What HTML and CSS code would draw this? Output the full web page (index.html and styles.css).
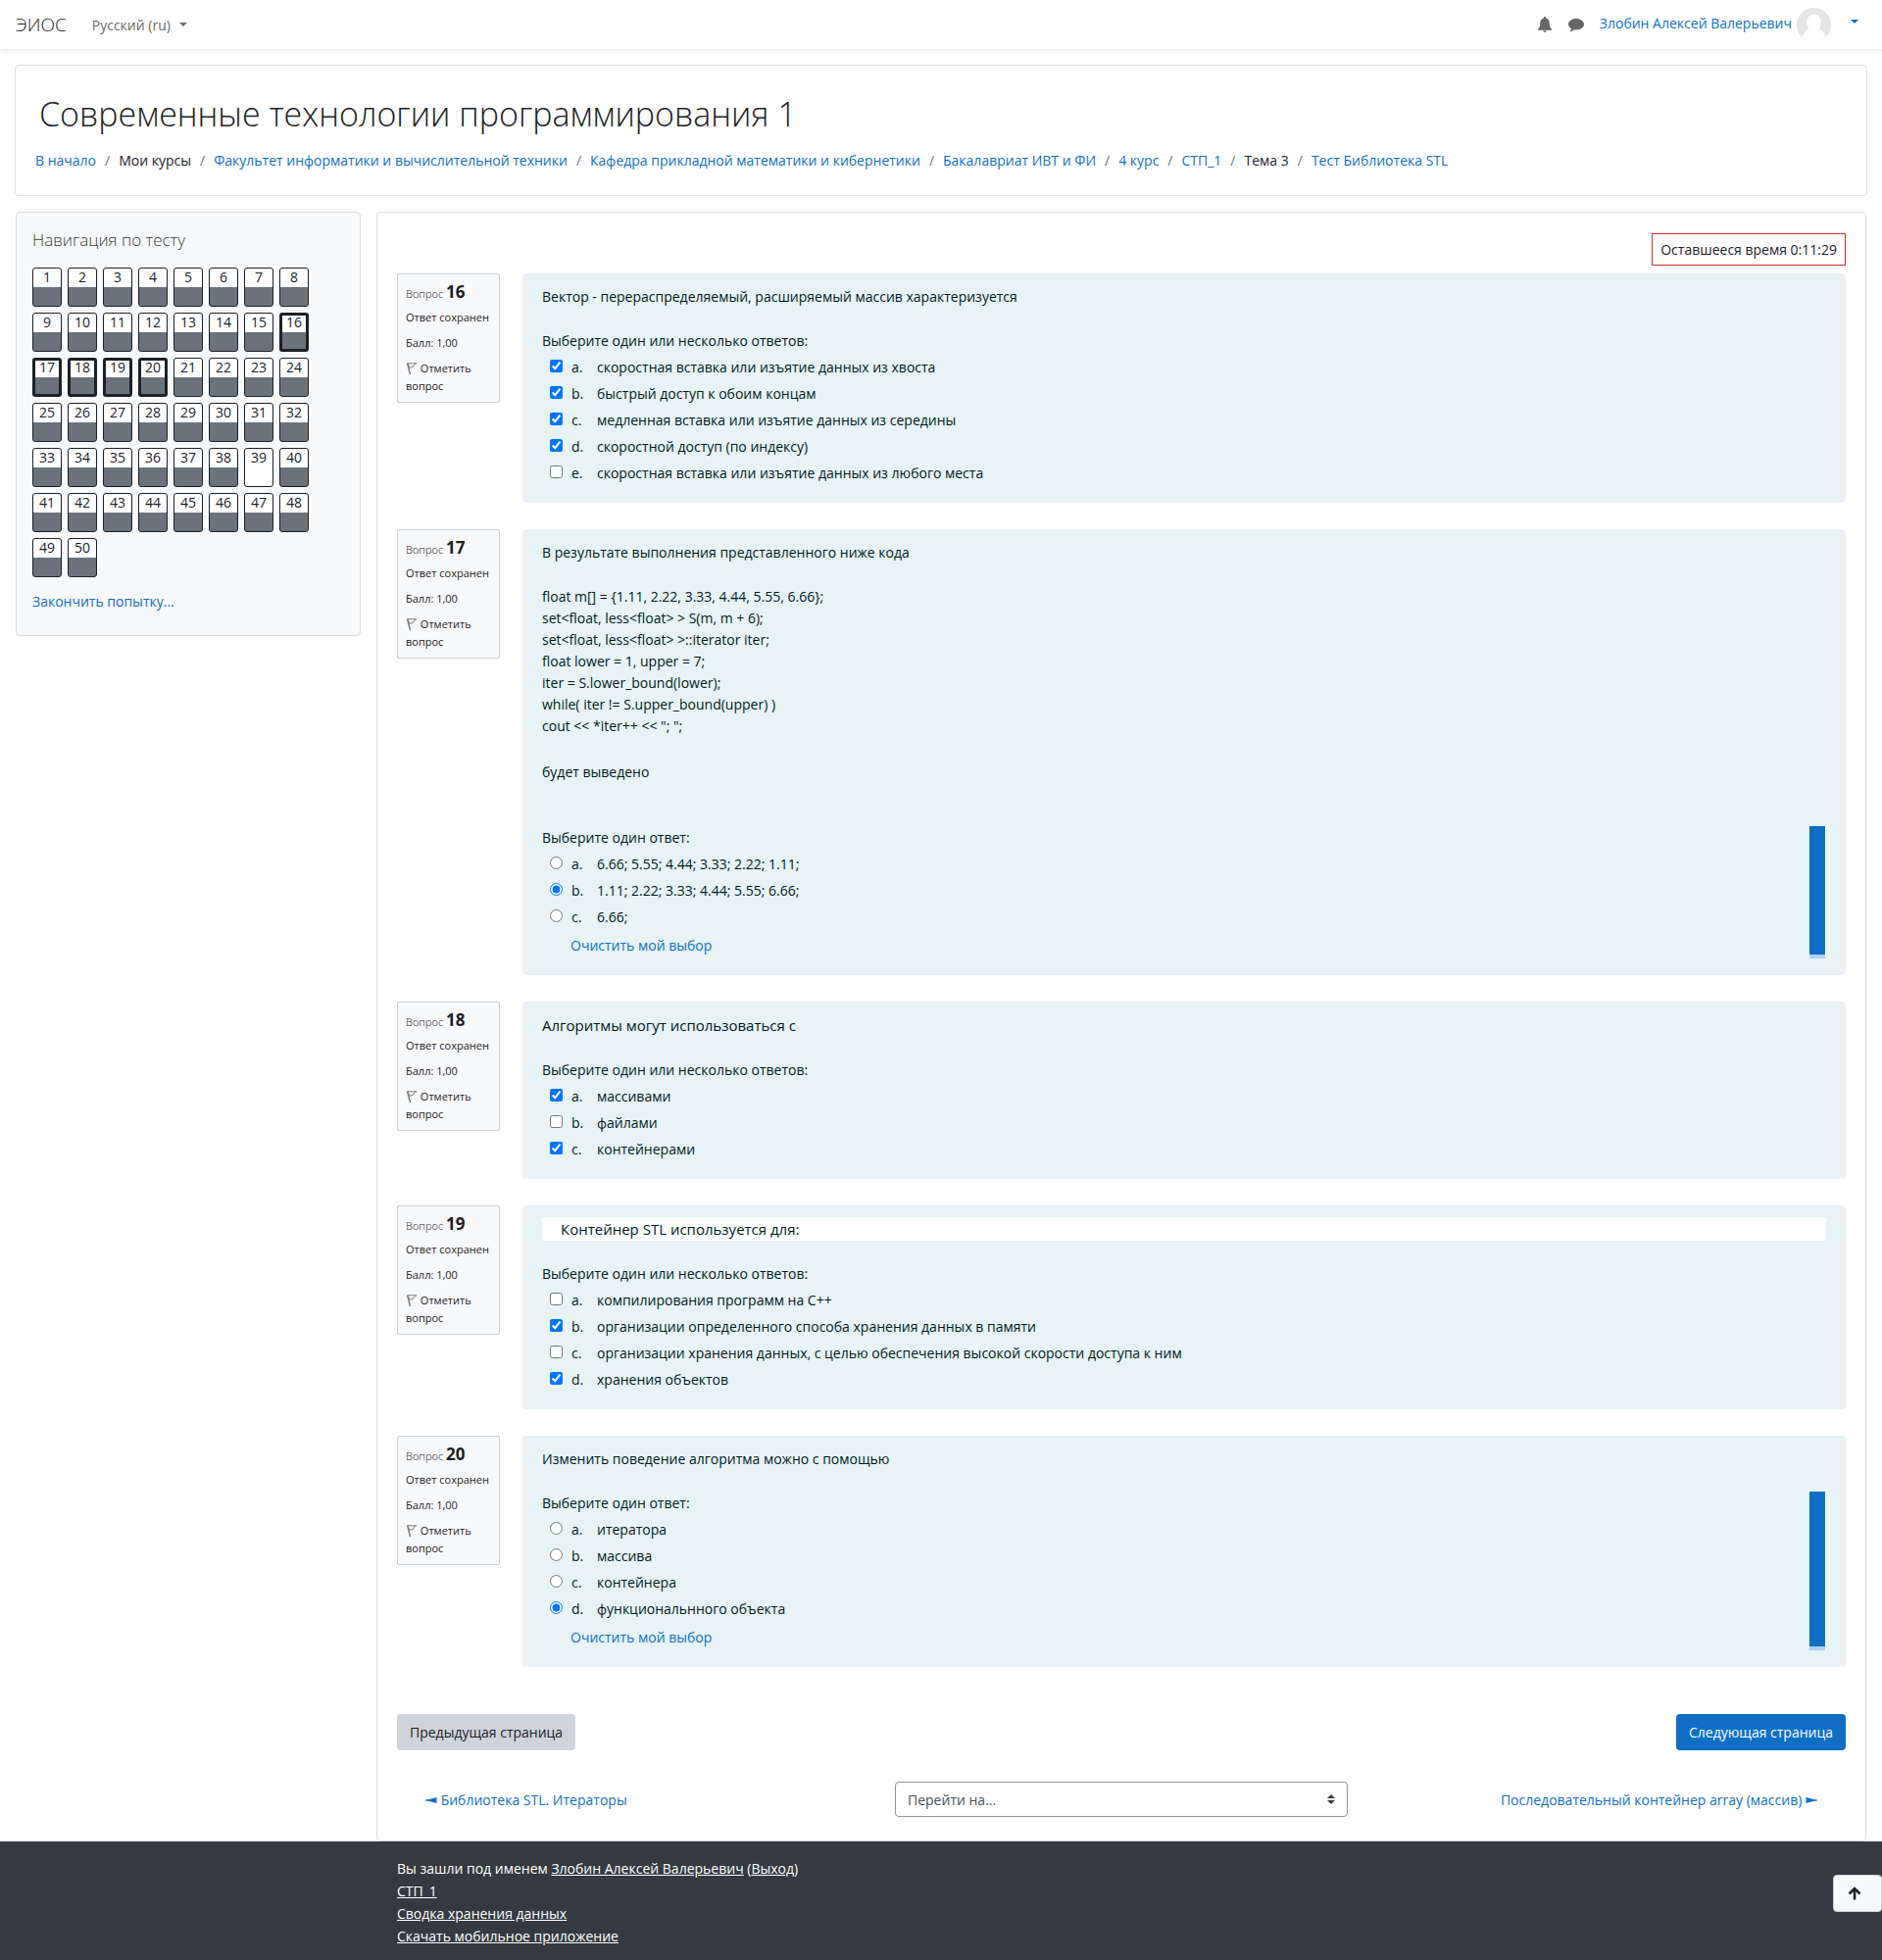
FILE: index.html
```html
<!DOCTYPE html>
<html lang="ru">
<head>
<meta charset="utf-8">
<title>Тест Библиотека STL</title>
<meta name="viewport" content="width=device-width, initial-scale=1">
<link rel="stylesheet" href="styles.css">
</head>
<body>
<svg class="sprite" aria-hidden="true">
  <symbol id="flag" viewBox="0 0 12 14"><path d="M1.500 1.500 4.500 13" fill="none" stroke="#777" stroke-width="1.400"/><path d="M2 1.600 11 1.800 8.200 3.400 8 5 4 6.400Z" fill="#eee" stroke="#888" stroke-width="1"/></symbol>
</svg>
<nav class="navbar">
  <a class="brand" href="#">ЭИОС</a>
  <a class="lang" href="#">Русский (ru) <span class="caret"></span></a>
  <div class="user-nav">
    <button class="icon-btn" aria-label="Уведомления"><svg width="16" height="16" viewBox="0 0 16 16"><path fill="#666" d="M8 0c.7 0 1.1.5 1.1 1.1v.5C11.300 2.100 12.700 3.900 12.700 6.200c0 3.600.9 5.300 2.300 6.500v1.100H1v-1.100C2.400 11.500 3.300 9.800 3.300 6.200c0-2.300 1.400-4.100 3.600-4.600v-.5C6.900.5 7.300 0 8 0zM6.200 14.300h3.600a1.800 1.700 0 0 1-3.600 0z"/></svg></button>
    <button class="icon-btn" aria-label="Сообщения"><svg width="16" height="16" viewBox="0 0 16 16"><path fill="#666" d="M8 2c4.400 0 8 2.500 8 5.700s-3.600 5.700-8 5.700c-.7 0-1.300-.1-1.900-.2C4.800 14.400 3.200 15.200 1.500 15.300c.9-1 1.400-2 1.500-3.200C1.200 11.100 0 9.500 0 7.700 0 4.500 3.600 2 8 2z"/></svg></button>
    <a class="user" href="#">Злобин Алексей Валерьевич
      <svg width="35" height="35" viewBox="0 0 35 35"><defs><clipPath id="round"><circle cx="17.500" cy="17.500" r="17.500"/></clipPath></defs><g clip-path="url(#round)"><path fill="#e5e5e5" d="M0 0h35v35H0z"/><ellipse cx="17.500" cy="15" rx="7.500" ry="8.500" fill="#fff"/><path fill="#fff" d="M4 35C6 27 9 22.500 13 21h9c4 1.500 7 6 9 14z"/></g></svg>
      <span class="caret"></span></a>
  </div>
</nav>

<header class="page-header">
  <h1>Современные технологии программирования 1</h1>
  <ol class="breadcrumb">
    <li><a href="#">В начало</a></li>
    <li>Мои курсы</li>
    <li><a href="#">Факультет информатики и вычислительной техники</a></li>
    <li><a href="#">Кафедра прикладной математики и кибернетики</a></li>
    <li><a href="#">Бакалавриат ИВТ и ФИ</a></li>
    <li><a href="#">4 курс</a></li>
    <li><a href="#">СТП_1</a></li>
    <li>Тема 3</li>
    <li><a href="#">Тест Библиотека STL</a></li>
  </ol>
</header>

<div class="columns">
  <aside class="quiz-nav">
    <h2>Навигация по тесту</h2>
    <div class="quiz-buttons">
      <a href="#">1</a><a href="#">2</a><a href="#">3</a><a href="#">4</a><a href="#">5</a><a href="#">6</a><a href="#">7</a><a href="#">8</a>
      <a href="#">9</a><a href="#">10</a><a href="#">11</a><a href="#">12</a><a href="#">13</a><a href="#">14</a><a href="#">15</a><a class="current" href="#">16</a>
      <a class="current" href="#">17</a><a class="current" href="#">18</a><a class="current" href="#">19</a><a class="current" href="#">20</a><a href="#">21</a><a href="#">22</a><a href="#">23</a><a href="#">24</a>
      <a href="#">25</a><a href="#">26</a><a href="#">27</a><a href="#">28</a><a href="#">29</a><a href="#">30</a><a href="#">31</a><a href="#">32</a>
      <a href="#">33</a><a href="#">34</a><a href="#">35</a><a href="#">36</a><a href="#">37</a><a href="#">38</a><a class="empty" href="#">39</a><a href="#">40</a>
      <a href="#">41</a><a href="#">42</a><a href="#">43</a><a href="#">44</a><a href="#">45</a><a href="#">46</a><a href="#">47</a><a href="#">48</a>
      <a href="#">49</a><a href="#">50</a>
    </div>
    <a href="#">Закончить попытку...</a>
  </aside>

  <main class="quiz">
    <div class="timer">Оставшееся время 0:11:29</div>

    <section class="question">
      <div class="info">
        <h3>Вопрос <b>16</b></h3><p>Ответ сохранен</p><p>Балл: 1,00</p>
        <a href="#"><svg width="12" height="14"><use href="#flag"/></svg> Отметить вопрос</a>
      </div>
      <div class="body">
        <p>Вектор - перераспределяемый, расширяемый массив характеризуется</p>
        <fieldset class="answers">
          <legend>Выберите один или несколько ответов:</legend>
          <label><input type="checkbox" checked><span>a.</span>скоростная вставка или изъятие данных из хвоста</label>
          <label><input type="checkbox" checked><span>b.</span>быстрый доступ к обоим концам</label>
          <label><input type="checkbox" checked><span>c.</span>медленная вставка или изъятие данных из середины</label>
          <label><input type="checkbox" checked><span>d.</span>скоростной доступ (по индексу)</label>
          <label><input type="checkbox"><span>e.</span>скоростная вставка или изъятие данных из любого места</label>
        </fieldset>
      </div>
    </section>

    <section class="question">
      <div class="info">
        <h3>Вопрос <b>17</b></h3><p>Ответ сохранен</p><p>Балл: 1,00</p>
        <a href="#"><svg width="12" height="14"><use href="#flag"/></svg> Отметить вопрос</a>
      </div>
      <div class="body">
        <p>В результате выполнения представленного ниже кода</p>
        <p class="code">float m[] = {1.11, 2.22, 3.33, 4.44, 5.55, 6.66};<br>set&lt;float, less&lt;float&gt; &gt; S(m, m + 6);<br>set&lt;float, less&lt;float&gt; &gt;::iterator iter;<br>float lower = 1, upper = 7;<br>iter = S.lower_bound(lower);<br>while( iter != S.upper_bound(upper) )<br>cout &lt;&lt; *iter++ &lt;&lt; "; ";</p>
        <p class="spaced">будет выведено</p>
        <fieldset class="answers single">
          <legend>Выберите один ответ:</legend>
          <label><input type="radio" name="q17"><span>a.</span>6.66; 5.55; 4.44; 3.33; 2.22; 1.11;</label>
          <label><input type="radio" name="q17" checked><span>b.</span>1.11; 2.22; 3.33; 4.44; 5.55; 6.66;</label>
          <label><input type="radio" name="q17"><span>c.</span>6.66;</label>
          <a class="clear" href="#">Очистить мой выбор</a>
        </fieldset>
      </div>
    </section>

    <section class="question">
      <div class="info">
        <h3>Вопрос <b>18</b></h3><p>Ответ сохранен</p><p>Балл: 1,00</p>
        <a href="#"><svg width="12" height="14"><use href="#flag"/></svg> Отметить вопрос</a>
      </div>
      <div class="body">
        <p class="large">Алгоритмы могут использоваться с</p>
        <fieldset class="answers">
          <legend>Выберите один или несколько ответов:</legend>
          <label><input type="checkbox" checked><span>a.</span>массивами</label>
          <label><input type="checkbox"><span>b.</span>файлами</label>
          <label><input type="checkbox" checked><span>c.</span>контейнерами</label>
        </fieldset>
      </div>
    </section>

    <section class="question">
      <div class="info">
        <h3>Вопрос <b>19</b></h3><p>Ответ сохранен</p><p>Балл: 1,00</p>
        <a href="#"><svg width="12" height="14"><use href="#flag"/></svg> Отметить вопрос</a>
      </div>
      <div class="body">
        <p class="large pasted">Контейнер STL используется для:</p>
        <fieldset class="answers">
          <legend>Выберите один или несколько ответов:</legend>
          <label><input type="checkbox"><span>a.</span>компилирования программ на С++</label>
          <label><input type="checkbox" checked><span>b.</span>организации определенного способа хранения данных в памяти</label>
          <label><input type="checkbox"><span>c.</span>организации хранения данных, с целью обеспечения высокой скорости доступа к ним</label>
          <label><input type="checkbox" checked><span>d.</span>хранения объектов</label>
        </fieldset>
      </div>
    </section>

    <section class="question">
      <div class="info">
        <h3>Вопрос <b>20</b></h3><p>Ответ сохранен</p><p>Балл: 1,00</p>
        <a href="#"><svg width="12" height="14"><use href="#flag"/></svg> Отметить вопрос</a>
      </div>
      <div class="body">
        <p>Изменить поведение алгоритма можно с помощью</p>
        <fieldset class="answers single">
          <legend>Выберите один ответ:</legend>
          <label><input type="radio" name="q20"><span>a.</span>итератора</label>
          <label><input type="radio" name="q20"><span>b.</span>массива</label>
          <label><input type="radio" name="q20"><span>c.</span>контейнера</label>
          <label><input type="radio" name="q20" checked><span>d.</span>функциональнного объекта</label>
          <a class="clear" href="#">Очистить мой выбор</a>
        </fieldset>
      </div>
    </section>

    <div class="pager">
      <button class="btn">Предыдущая страница</button>
      <button class="btn primary">Следующая страница</button>
    </div>
    <div class="activity-nav">
      <a href="#"><svg width="12" height="6" viewBox="0 0 12 6"><path fill="currentColor" d="M0 2.400 4 2 11.500 0v6L4 4 0 3.600z"/></svg> Библиотека STL. Итераторы</a>
      <select aria-label="Перейти на..."><option>Перейти на...</option></select>
      <a class="next" href="#">Последовательный контейнер array (массив) <svg width="12" height="6" viewBox="0 0 12 6"><path fill="currentColor" d="M12 2.400 8 2 .5 0v6L8 4l4-.4z"/></svg></a>
    </div>
  </main>
</div>

<footer class="footer">
  <div>Вы зашли под именем <a href="#">Злобин Алексей Валерьевич</a> (<a href="#">Выход</a>)</div>
  <a href="#">СТП_1</a>
  <a href="#">Сводка хранения данных</a>
  <a href="#">Скачать мобильное приложение</a>
</footer>
<button class="to-top" aria-label="Наверх"><svg width="14" height="14" viewBox="0 0 14 14"><path d="M7 13.500V2M1.500 7.500 7 2l5.500 5.500" fill="none" stroke="#1d2125" stroke-width="2.600"/></svg></button>
</body>
</html>
```
FILE: styles.css
```css
* { box-sizing: border-box; }
body {
  margin: 0;
  min-height: 100vh;
  display: flex;
  flex-direction: column;
  background: #fff;
  color: #1d2125;
  font: 14px/23px "Open Sans", "Noto Sans", sans-serif;
}
h1, h2, h3, p, ol, fieldset { margin: 0; padding: 0; border: 0; }
a { color: #0f6fc5; text-decoration: none; }
button { font: inherit; cursor: pointer; }
.sprite { display: none; }
.caret {
  display: inline-block;
  border: 4px solid transparent;
  border-top-color: currentColor;
  border-bottom: 0;
  vertical-align: 4px;
}

.navbar {
  display: flex;
  align-items: center;
  height: 50px;
  padding: 0 24px 0 16px;
  box-shadow: 0 2px 4px rgba(0, 0, 0, .08);
}
.brand { color: #1d2125; font-size: 19px; font-weight: 300; }
.lang { margin-left: 26px; color: #6a6a6a; }
.lang .caret { margin-left: 5px; }
.user-nav { display: flex; align-items: center; margin-left: auto; }
.icon-btn { display: flex; padding: 0; margin-right: 16px; border: 0; background: none; }
.user { display: flex; align-items: flex-start; line-height: 32px; }
.user svg { margin: 0 20px 0 5px; }
.user .caret { margin-top: 12px; }

.page-header {
  margin: 16px 15px;
  padding: 24px 20px;
  border: 1px solid #dfdfdf;
  border-radius: 4px;
}
h1 { padding-left: 4px; font-size: 34px; line-height: 50px; font-weight: 300; }
.breadcrumb { display: flex; flex-wrap: wrap; padding-top: 11px; list-style: none; }
.breadcrumb li + li::before { content: "/"; padding: 0 9px; color: #6a737b; }

.columns { display: grid; grid-template-columns: 352px 1fr; gap: 16px; margin: 0 16px; align-items: start; }
.quiz-nav {
  padding: 16px 16px 23px;
  border: 1px solid #d9dbde;
  border-radius: 4px;
  background: #f8f9fa;
}
h2 { margin-bottom: 16px; color: #373a3c; font-size: 17px; line-height: 24px; font-weight: 300; }
.quiz-buttons { display: flex; flex-wrap: wrap; gap: 6px; max-width: 288px; margin-bottom: 13px; }
.quiz-buttons a {
  width: 30px;
  height: 40px;
  border: 1px solid #1d2125;
  border-radius: 3px;
  background: linear-gradient(#fff 19px, #6a737b 19px);
  color: #1d2125;
  line-height: 18px;
  text-align: center;
}
.quiz-buttons .current { border-width: 3px; line-height: 14px; background: linear-gradient(#fff 17px, #6a737b 17px); }
.quiz-buttons .empty { background: #fff; }

.quiz { padding: 21px 20px 24px; border: 1px solid #dfdfdf; border-radius: 4px; }
.timer {
  width: fit-content;
  margin: 0 0 8px auto;
  padding: 4px 8px;
  border: 1px solid #ca3120;
}
.question { display: grid; grid-template-columns: 105px 1fr; gap: 23px; align-items: start; margin-bottom: 27px; }
.info {
  padding: 6px 8px 7px;
  border: 1px solid #cad0d7;
  border-radius: 2px;
  background: #f8f9fa;
  font-size: 11px;
  line-height: 18px;
}
.info h3 { margin-bottom: 3px; font-size: 11px; line-height: 24px; font-weight: 300; }
.info b { font-size: 17px; font-weight: 700; }
.info p { margin-bottom: 8px; white-space: nowrap; }
.info a { color: #1d2125; }
.info svg { vertical-align: -3px; }
.body { padding: 12px 20px 17px; border-radius: 4px; background: #e7f3f5; color: #001a1e; }
.body p { margin-bottom: 22px; }
.body .code { padding-top: 1px; line-height: 22px; margin-bottom: 24px; }
.body .spaced { margin-bottom: 44px; }
.body .large { font-size: 15px; line-height: 24px; }
.body .pasted { padding: 0 19px; background: #fff; }
.answers legend { float: left; width: 100%; padding: 0; margin-bottom: 2px; }
.answers label { clear: both; display: flex; align-items: center; width: fit-content; padding: 2px 0; }
.answers input { width: 13px; height: 13px; margin: 0 9px 2px 8px; }
.answers label span { width: 26px; }
.answers.single {
  border-right: 1px solid #fff;
  background: linear-gradient(to top, #a9d2f8 4px, #0f6fc5 4px) no-repeat right / 16px 100%;
}
.clear { display: block; padding: 4px 29px 2px; }

.pager { display: flex; justify-content: space-between; margin-top: 48px; }
.btn { height: 37px; padding: 0 13px; border: 0; border-radius: 4px; background: #ced4da; color: #1d2125; }
.btn.primary { background: #0f6fc5; color: #fff; }
.activity-nav {
  display: grid;
  grid-template-columns: 1fr 462px 1fr;
  align-items: center;
  margin-top: 32px;
  padding: 0 29px;
}
.activity-nav svg { vertical-align: 2px; }
.activity-nav .next { text-align: right; }
select {
  height: 36px;
  padding: 0 12px;
  border: 1px solid #8f959e;
  border-radius: 4px;
  appearance: none;
  background: #fff url("data:image/svg+xml,%3Csvg xmlns='http://www.w3.org/2000/svg' viewBox='0 0 8 10'%3E%3Cpath fill='%23343a40' d='M0 4 4 0l4 4zM0 6l4 4 4-4z'/%3E%3C/svg%3E") no-repeat right 12px center / 8px 10px;
  color: #495057;
  font: inherit;
}

.footer {
  flex: 1;
  display: flex;
  flex-direction: column;
  align-items: flex-start;
  padding: 16px 16px 14px 405px;
  background: #343a40;
  color: #fff;
}
.footer a { color: #fff; text-decoration: underline; }
.to-top {
  position: fixed;
  right: 0;
  bottom: 49px;
  display: flex;
  align-items: center;
  width: 50px;
  height: 38px;
  padding: 0 14px;
  border: 1px solid #cfd2d5;
  border-radius: 4px;
  background: #f8f9fa;
}
```
